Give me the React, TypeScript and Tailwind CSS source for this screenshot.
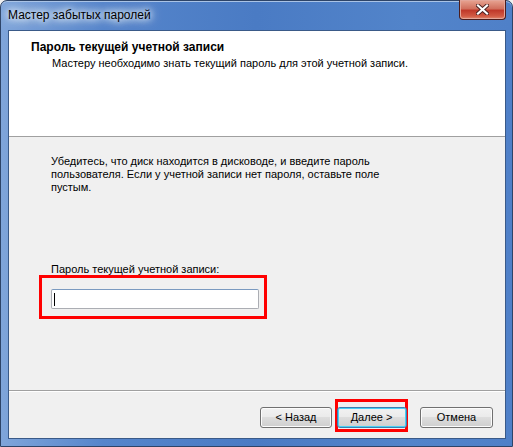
import React from 'react';

const font = "font-['Liberation_Sans',Arial,sans-serif]";

const Win7Button = ({ label, isDefault, className }: { label: string; isDefault?: boolean; className?: string }) => (
  <button
    className={
      'h-[21px] rounded-[3px] border text-[11px] text-black leading-none bg-[linear-gradient(#f2f2f2_0%,#ebebeb_45%,#dddddd_50%,#cfcfcf_100%)] ' +
      (isDefault
        ? 'border-[#3c7fb1] shadow-[inset_0_0_0_1px_#48d0f5] '
        : 'border-[#707070] shadow-[inset_0_0_0_1px_#fcfcfc] ') +
      (className ?? '')
    }
  >
    {label}
  </button>
);

const App = () => {
  return (
    <div className={`w-[513px] h-[447px] ${font} bg-[#f0f0f0]`}>
      <div className="w-full h-full flex flex-col rounded-t-[7px] border border-[#2d4468] bg-[linear-gradient(90deg,#7fa5da_0%,#5585cb_20%,#4a7bc4_50%,#5284ca_80%,#4f80c8_100%)] pl-[7px] pr-[6px] pb-[7px] shadow-[inset_0_1px_0_#a9c3e6]">
        {/* title bar */}
        <div className="h-[29px] flex items-start justify-between">
          <span className="mt-[6px] text-[12px] leading-[16px] text-black [text-shadow:0_0_6px_#ffffff,0_0_10px_#ffffff,0_0_14px_#e6f0fb]">
            Мастер забытых паролей
          </span>
          <div className="w-[47px] h-[20px] mt-[-1px] rounded-b-[4px] border border-[#4c1d1d] border-t-0 bg-[linear-gradient(#e8a593_0%,#d1705e_45%,#c0392a_55%,#d25a44_85%,#e08a6f_100%)] shadow-[inset_0_0_0_1px_#e4a69a] flex items-center justify-center">
            <svg width="13" height="11" viewBox="0 0 13 11">
              <path d="M2 1.5 L11 9.5 M11 1.5 L2 9.5" stroke="#4a2020" strokeWidth="4" strokeLinecap="square" />
              <path d="M2 1.5 L11 9.5 M11 1.5 L2 9.5" stroke="#ffffff" strokeWidth="2.2" strokeLinecap="square" />
            </svg>
          </div>
        </div>

        {/* client area */}
        <div className="flex-1 flex flex-col border border-[#3a5a88] bg-[#f0f0f0]">
          <div className="h-[106px] bg-white border-b border-[#a0a0a0] pl-[22px] pt-[10px]">
            <div className="text-[12px] leading-[13px] font-bold text-black">Пароль текущей учетной записи</div>
            <div className="mt-[3px] pl-[21px] text-[11px] leading-[13px] text-black">
              Мастеру необходимо знать текущий пароль для этой учетной записи.
            </div>
          </div>

          <div className="flex-1 flex flex-col pl-[42px] pt-[18px] border-b border-[#a0a0a0]">
            <p className="text-[11px] leading-[13px] text-black">
              Убедитесь, что диск находится в дисководе, и введите пароль
              <br />
              пользователя. Если у учетной записи нет пароля, оставьте поле
              <br />
              пустым.
            </p>
            <label className="mt-[69px] text-[11px] leading-[12px] text-black">Пароль текущей учетной записи:</label>
            <div className="ml-[-12px] w-[228px] h-[44px] border-[3px] border-[#ff0000] pl-[9px] pt-[11px]">
              <div className="w-[208px] h-[20px] bg-white border border-[#abadb3] border-t-[#7a9ac0] rounded-[2px] flex items-center pl-[2px]">
                <div className="w-px h-[13px] bg-black" />
              </div>
            </div>
          </div>

          <div className="h-[47px] border-t border-white flex items-start justify-end pr-[12px] pt-[14px]">
            <Win7Button label="< Назад" className="w-[72px] mt-[1px]" />
            <div className="ml-[3px] mt-[-7px] w-[73px] h-[33px] border-[3px] border-[#ff0000] flex justify-center pt-[5px]">
              <Win7Button label="Далее >" isDefault className="w-[70px] -mx-[2px]" />
            </div>
            <Win7Button label="Отмена" className="ml-[12px] w-[73px] mt-[1px]" />
          </div>
        </div>
      </div>
    </div>
  );
};

export default App;
